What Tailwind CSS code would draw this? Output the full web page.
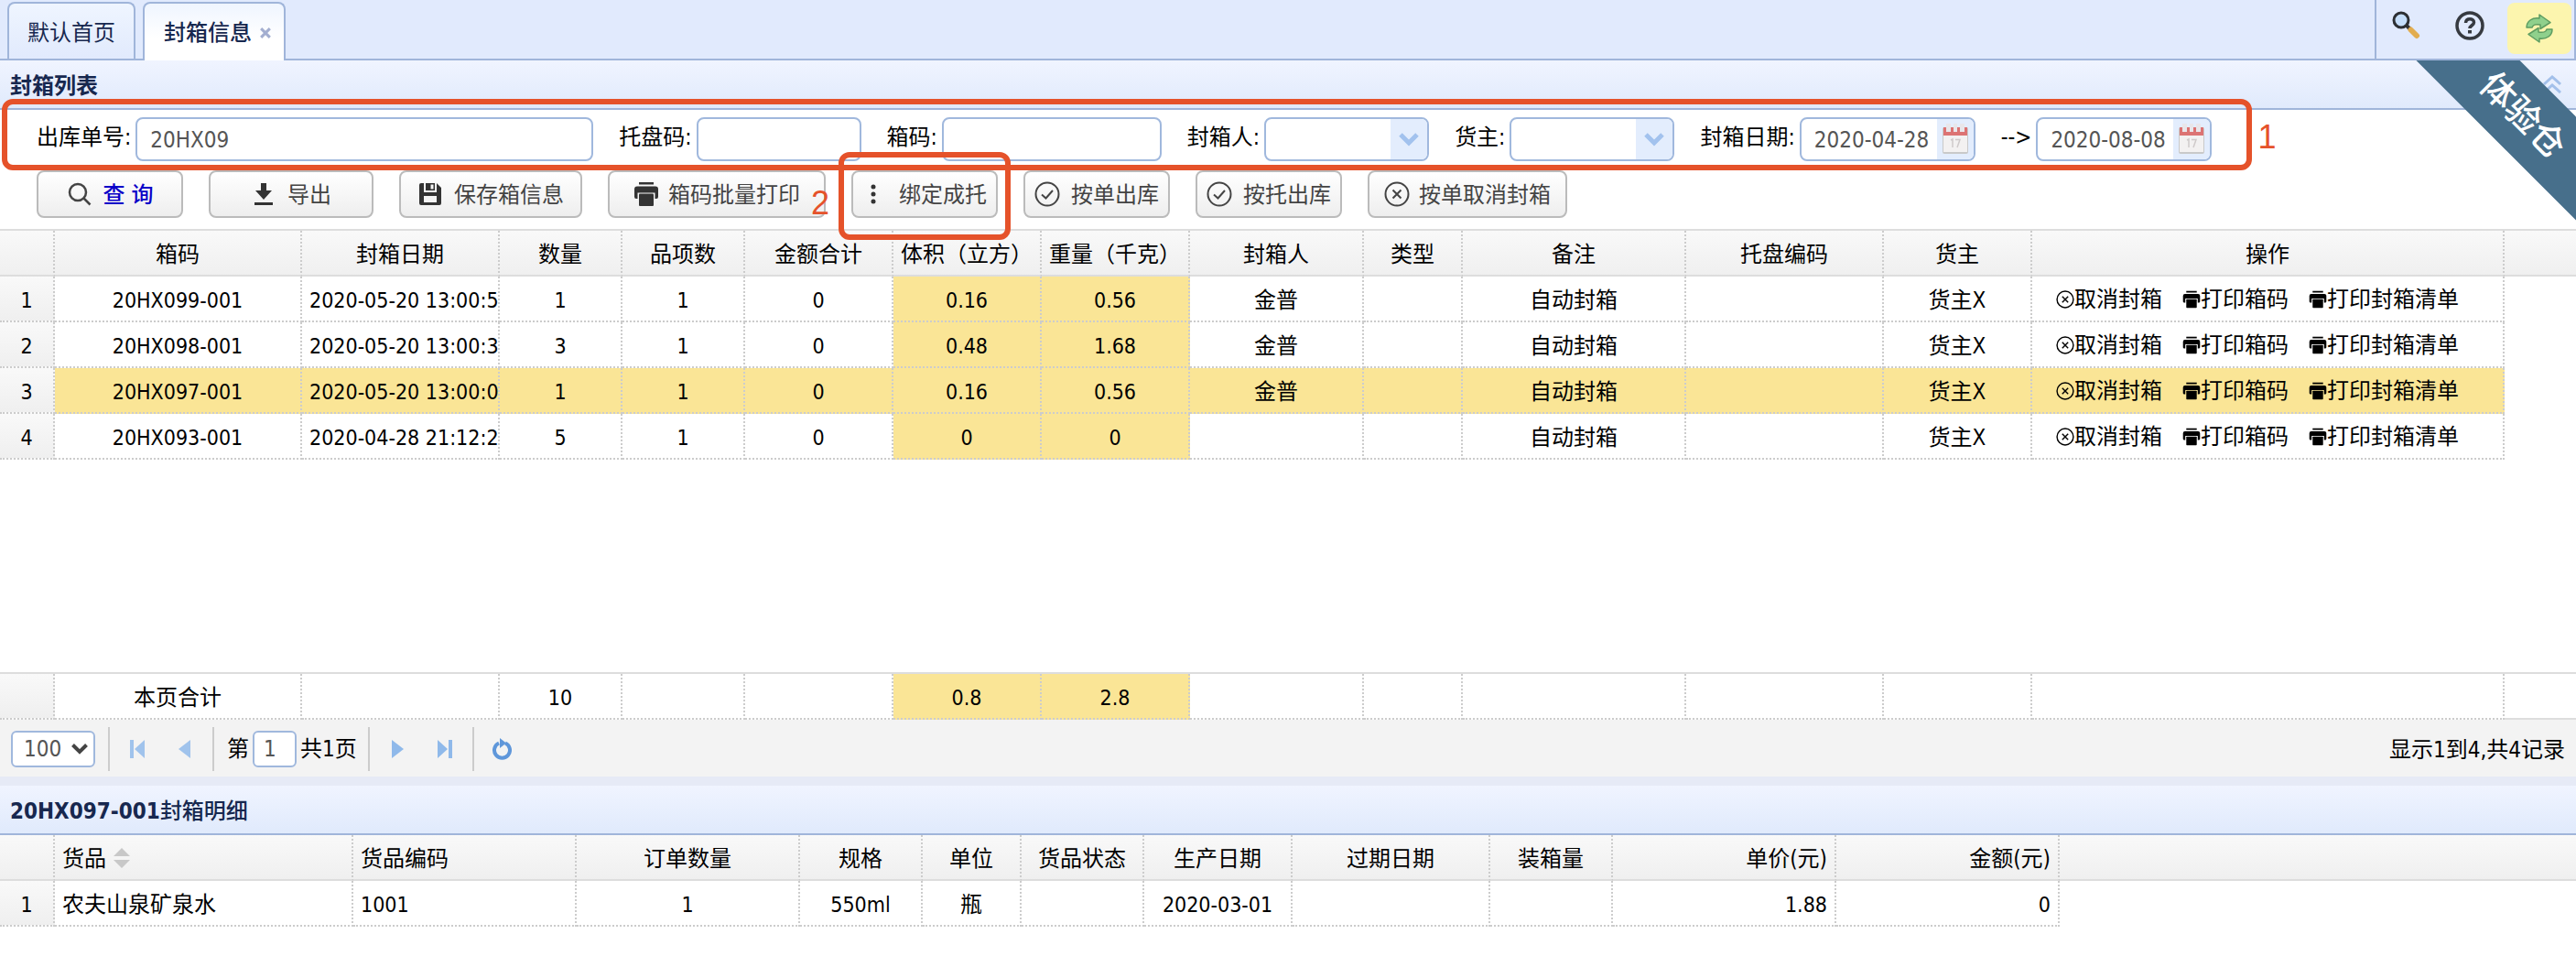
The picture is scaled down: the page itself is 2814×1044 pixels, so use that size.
<!DOCTYPE html>
<html lang="zh-CN">
<head>
  <meta charset="UTF-8" />
  <meta name="viewport" content="width=device-width, initial-scale=1.0"/>
  <title>封箱信息</title>
  <script src="https://cdn.jsdelivr.net/npm/@tailwindcss/browser@4"></script>
</head>
<body class="bg-white min-h-screen overflow-x-hidden text-2xl leading-8 text-black font-['DejaVu_Sans_Condensed','Noto_Sans_CJK_SC',sans-serif]">

  <!-- Shared icons -->
  <svg class="hidden">
    <symbol id="icon-print" viewBox="0 0 28 28">
      <path d="M6 2h16M4 5.500h20a3 3 0 0 1 3 3V17a2 2 0 0 1-2 2h-1.500v-6.500h-19V19H3a2 2 0 0 1-2-2V8.500a3 3 0 0 1 3-3z" fill="currentColor"/>
      <rect x="6" y="1" width="16" height="2.500" fill="currentColor"/>
      <rect x="6" y="13.500" width="16" height="13.500" rx="1" fill="currentColor"/>
    </symbol>
    <symbol id="icon-cancel" viewBox="0 0 28 28">
      <g fill="none" stroke="currentColor" stroke-width="2"><circle cx="14" cy="14" r="12.500"/><path d="M9.500 9.500l9 9M18.500 9.500l-9 9"/></g>
    </symbol>
    <symbol id="icon-check" viewBox="0 0 28 28">
      <g fill="none" stroke="currentColor" stroke-width="2"><circle cx="14" cy="14" r="12.500"/><path d="M8 14.500l4.500 4L20 10"/></g>
    </symbol>
    <symbol id="icon-calendar" viewBox="0 0 28 34">
      <rect x="0" y="4" width="28" height="29" rx="2" fill="#c9c9c9"/>
      <rect x="1" y="13" width="26" height="18" fill="#f3f1f1"/>
      <path d="M1 4h26v9H1z" fill="#dc7373"/>
      <path d="M4 0h5v9H4zM12 0h4v9h-4zM19 0h5v9h-5z" fill="#e9e6ea"/>
      <path d="M9 18l2-1v9M14 17.500h5l-3 8.500" fill="none" stroke="#cfcaca" stroke-width="1.500"/>
    </symbol>
    <symbol id="icon-down" viewBox="0 0 24 16">
      <path d="M3 3l9 9 9-9" fill="none" stroke="#a2c2ee" stroke-width="5"/>
    </symbol>
  </svg>

  <!-- Tabs -->
  <header class="flex h-[66px] border-b-2 border-[#a0b5da] bg-[#e1eafd] pl-2 text-[#17284f]">
    <nav class="flex gap-2 pt-0.5">
      <button type="button" class="h-[62px] w-[140px] rounded-t-lg border-2 border-b-0 border-[#a0b5da] bg-linear-to-b from-[#eff5ff] to-[#e1eafd] pt-1">默认首页</button>
      <div class="flex h-16 w-[156px] items-center justify-center gap-2 rounded-t-lg border-2 border-b-0 border-[#a0b5da] bg-linear-to-b from-[#eff5ff] to-white to-60% pt-0.5 pl-2">
        <button type="button" class="font-medium">封箱信息</button>
        <button type="button" aria-label="关闭">
          <svg class="size-3.5" viewBox="0 0 16 16"><path d="M2.500 2.500l11 11M13.500 2.500l-11 11" stroke="#a3aed0" stroke-width="3.500"/></svg>
        </button>
      </div>
    </nav>
    <div class="ml-auto flex items-start border-x-2 border-[#a0b5da]">
      <button type="button" aria-label="搜索" class="flex h-14 w-16 items-center justify-center">
        <svg class="size-8" viewBox="0 0 32 32">
          <path d="M17 16l6 6" stroke="#333" stroke-width="4"/>
          <path d="M21.500 20.500l6.500 6.500" stroke="#e2ad4f" stroke-width="6" stroke-linecap="round"/>
          <circle cx="11" cy="10" r="8" fill="#c5defb" stroke="#2c2f33" stroke-width="3"/>
        </svg>
      </button>
      <button type="button" aria-label="帮助" class="flex h-14 w-19 items-center justify-center">
        <svg class="size-8" viewBox="0 0 32 32" fill="none" stroke="#363a40">
          <circle cx="16" cy="16" r="14" stroke-width="3.500"/>
          <path d="M11.500 13c0-6 9-5.500 9-.5 0 3-4.500 3.500-4.500 6.500" stroke-width="3.500"/>
          <path d="M16 21v3.500" stroke-width="4"/>
        </svg>
      </button>
      <button type="button" aria-label="刷新" class="m-[3px] flex h-14 w-[70px] items-center justify-center rounded-lg bg-[#fcf5ae]">
        <svg class="size-8" viewBox="0 0 32 32" fill="#8fd08c" stroke="#5d9c61" stroke-width="1.500" stroke-linejoin="round">
          <path d="M2 15c0-7 6-11 14-10V1l12 8.500-11 7V12c-6-1-8 0-9 3z"/>
          <path d="M30 17c0 7-6 11-14 10v4L4 22.500l11-7V20c6 1 8 0 9-3z"/>
        </svg>
      </button>
    </div>
  </header>

  <main>
    <section class="relative">
      <div class="flex h-[54px] items-center justify-between border-b-2 border-[#a0b5da] bg-linear-to-b from-[#f0f4ff] to-[#e0eafc] pr-4 pl-[11px]">
        <h2 class="pt-1 font-bold text-[#17284f]">封箱列表</h2>
        <button type="button" aria-label="折叠">
          <svg class="size-5" viewBox="0 0 20 20" fill="none" stroke="#a3c0ea" stroke-width="3"><path d="M1 10l9-8 9 8M1 19l9-8 9 8"/></svg>
        </button>
      </div>

      <!-- Corner ribbon -->
      <div class="pointer-events-none absolute top-0 right-0 size-44 overflow-hidden">
        <div class="absolute top-5 -left-8 flex h-20 w-[300px] rotate-45 items-center justify-center bg-[#476f8b] text-[38px] font-medium text-white">体验仓</div>
      </div>

      <!-- Filters -->
      <form>
        <div class="relative flex w-fit items-center gap-7 pt-2 pr-[46px] pl-10">
          <div class="flex items-center gap-[5px]">
            <label for="orderNo" class="pb-1">出库单号:</label>
            <input id="orderNo" type="text" value="20HX09" class="h-12 w-[500px] rounded-lg border-2 border-[#a0b8dd] px-3.5 pt-0.5 text-[#555]">
          </div>
          <div class="flex items-center gap-[5px]">
            <label for="palletNo" class="pb-1">托盘码:</label>
            <input id="palletNo" type="text" class="h-12 w-[180px] rounded-lg border-2 border-[#a0b8dd] px-3.5 pt-0.5 text-[#555]">
          </div>
          <div class="flex items-center gap-[5px]">
            <label for="boxNo" class="pb-1">箱码:</label>
            <input id="boxNo" type="text" class="h-12 w-[240px] rounded-lg border-2 border-[#a0b8dd] px-3.5 pt-0.5 text-[#555]">
          </div>
          <div class="flex items-center gap-[5px]">
            <label for="packer" class="pb-1">封箱人:</label>
            <div class="relative">
              <select id="packer" class="block h-12 w-[180px] appearance-none rounded-lg border-2 border-[#a0b8dd] bg-white px-3.5"><option></option></select>
              <span class="pointer-events-none absolute inset-y-0.5 right-0.5 flex w-10 items-center justify-center rounded-r-md bg-[#e3edfd]"><svg class="h-4 w-6"><use href="#icon-down"/></svg></span>
            </div>
          </div>
          <div class="flex items-center gap-[5px]">
            <label for="owner" class="pb-1">货主:</label>
            <div class="relative">
              <select id="owner" class="block h-12 w-[180px] appearance-none rounded-lg border-2 border-[#a0b8dd] bg-white px-3.5"><option></option></select>
              <span class="pointer-events-none absolute inset-y-0.5 right-0.5 flex w-10 items-center justify-center rounded-r-md bg-[#e3edfd]"><svg class="h-4 w-6"><use href="#icon-down"/></svg></span>
            </div>
          </div>
          <div class="flex items-center gap-[5px]">
            <label for="dateFrom" class="pb-1">封箱日期:</label>
            <div class="relative">
              <input id="dateFrom" type="text" value="2020-04-28" class="block h-12 w-48 rounded-lg border-2 border-[#a0b8dd] pt-0.5 pl-3.5 text-[#555]">
              <span class="pointer-events-none absolute inset-y-0.5 right-0.5 flex w-10 items-center justify-center rounded-r-md bg-[#e3edfd]"><svg class="h-[34px] w-7"><use href="#icon-calendar"/></svg></span>
            </div>
          </div>
          <div class="flex items-center gap-[5px]">
            <label for="dateTo" class="pb-1">--&gt;</label>
            <div class="relative">
              <input id="dateTo" type="text" value="2020-08-08" class="block h-12 w-48 rounded-lg border-2 border-[#a0b8dd] pt-0.5 pl-3.5 text-[#555]">
              <span class="pointer-events-none absolute inset-y-0.5 right-0.5 flex w-10 items-center justify-center rounded-r-md bg-[#e3edfd]"><svg class="h-[34px] w-7"><use href="#icon-calendar"/></svg></span>
            </div>
          </div>
          <span class="pointer-events-none absolute inset-x-0.5 -top-3 -bottom-2.5 z-10 rounded-xl border-6 border-[#e5522a]"></span>
          <span class="absolute top-2.5 left-full ml-1 text-4xl font-['Liberation_Sans',sans-serif] text-[#e5522a]">1</span>
        </div>

        <!-- Toolbar -->
        <div class="mt-2.5 mb-3 flex gap-7 pl-10 text-[#444]">
          <button type="button" class="flex h-[52px] w-40 items-center justify-center gap-3 rounded-lg border-2 border-[#bbb] bg-linear-to-b from-white to-[#eee]">
            <svg class="size-7" viewBox="0 0 28 28" fill="none" stroke="#444" stroke-width="2.500"><circle cx="12" cy="12" r="9"/><path d="M18.500 18.500l7 7"/></svg>
            <span class="pt-0.5 font-medium text-[#0a00c8]">查 询</span>
          </button>
          <button type="button" class="flex h-[52px] w-[180px] items-center justify-center gap-3 rounded-lg border-2 border-[#bbb] bg-linear-to-b from-white to-[#eee]">
            <svg class="size-7" viewBox="0 0 28 28" fill="#333"><path d="M11 2h6v8h6l-9 10-9-10h6zM4 23h20v3H4z"/></svg>
            <span class="pt-0.5">导出</span>
          </button>
          <button type="button" class="flex h-[52px] w-[200px] items-center justify-center gap-3 rounded-lg border-2 border-[#bbb] bg-linear-to-b from-white to-[#eee]">
            <svg class="size-7" viewBox="0 0 28 28" fill="#333"><path fill-rule="evenodd" d="M4 2h3v10h14V2l5 5v17a2 2 0 0 1-2 2H4a2 2 0 0 1-2-2V4a2 2 0 0 1 2-2zM7 16v7h14v-7z"/><path d="M9 2h10v8H9z"/><path d="M14.500 3.500h3v5h-3z" fill="#f7f7f7"/></svg>
            <span class="pt-0.5">保存箱信息</span>
          </button>
          <button type="button" class="flex h-[52px] w-[238px] items-center justify-center gap-2.5 rounded-lg border-2 border-[#bbb] bg-linear-to-b from-white to-[#eee]">
            <svg class="size-7 text-[#333]"><use href="#icon-print"/></svg>
            <span class="pt-0.5">箱码批量打印</span>
          </button>
          <div class="relative">
            <button type="button" class="flex h-[52px] w-40 items-center justify-center gap-3 rounded-lg border-2 border-[#bbb] bg-linear-to-b from-white to-[#eee]">
              <svg class="size-7" viewBox="0 0 28 28" fill="#333"><circle cx="12" cy="6" r="2.500"/><circle cx="12" cy="14" r="2.500"/><circle cx="12" cy="22" r="2.500"/></svg>
              <span class="pt-0.5">绑定成托</span>
            </button>
            <span class="pointer-events-none absolute -inset-x-3.5 -top-5 -bottom-6 z-10 rounded-xl border-6 border-[#e5522a]"></span>
            <span class="absolute top-4 right-full mr-6 text-4xl font-['Liberation_Sans',sans-serif] text-[#e5522a]">2</span>
          </div>
          <button type="button" class="flex h-[52px] w-40 items-center justify-center gap-3 rounded-lg border-2 border-[#bbb] bg-linear-to-b from-white to-[#eee]">
            <svg class="size-7"><use href="#icon-check"/></svg>
            <span class="pt-0.5">按单出库</span>
          </button>
          <button type="button" class="flex h-[52px] w-40 items-center justify-center gap-3 rounded-lg border-2 border-[#bbb] bg-linear-to-b from-white to-[#eee]">
            <svg class="size-7"><use href="#icon-check"/></svg>
            <span class="pt-0.5">按托出库</span>
          </button>
          <button type="button" class="flex h-[52px] w-[218px] items-center justify-center gap-2.5 rounded-lg border-2 border-[#bbb] bg-linear-to-b from-white to-[#eee]">
            <svg class="size-7"><use href="#icon-cancel"/></svg>
            <span class="pt-0.5">按单取消封箱</span>
          </button>
        </div>
      </form>

      <!-- Box list -->
      <div class="min-h-[484px] border-t-2 border-[#ddd]">
        <table class="w-full table-fixed border-separate border-spacing-0 text-center whitespace-nowrap">
          <colgroup>
            <col class="w-[60px]"><col class="w-[270px]"><col class="w-[216px]"><col class="w-[134px]"><col class="w-[134px]"><col class="w-[162px]"><col class="w-[162px]"><col class="w-[162px]"><col class="w-[190px]"><col class="w-[108px]"><col class="w-[244px]"><col class="w-[216px]"><col class="w-[162px]"><col class="w-[516px]"><col>
          </colgroup>
          <thead id="boxHead" class="bg-linear-to-b from-[#f9f9f9] to-[#efefef]"></thead>
          <tbody id="boxBody"></tbody>
        </table>
      </div>
      <table class="w-full table-fixed border-separate border-spacing-0 border-t-2 border-[#ddd] text-center whitespace-nowrap">
        <colgroup>
          <col class="w-[60px]"><col class="w-[270px]"><col class="w-[216px]"><col class="w-[134px]"><col class="w-[134px]"><col class="w-[162px]"><col class="w-[162px]"><col class="w-[162px]"><col class="w-[190px]"><col class="w-[108px]"><col class="w-[244px]"><col class="w-[216px]"><col class="w-[162px]"><col class="w-[516px]"><col>
        </colgroup>
        <tbody id="boxFoot"></tbody>
      </table>

      <!-- Pager -->
      <div class="flex h-[62px] items-center bg-[#f3f3f3] pt-0.5 pr-3 pl-3">
        <label for="pageSize" class="sr-only">每页条数</label>
        <div class="relative">
          <select id="pageSize" class="block h-10 w-[92px] appearance-none rounded-md border-2 border-[#a0b8dd] bg-white pl-3 text-[#555]"><option>100</option></select>
          <svg class="pointer-events-none absolute top-3.5 right-2 h-3 w-[18px]" viewBox="0 0 18 12"><path d="M1.500 1.500L9 9l7.500-7.500" fill="none" stroke="#444" stroke-width="4"/></svg>
        </div>
        <span class="mr-1 ml-3.5 h-12 w-0.5 bg-[#ccc]"></span>
        <button type="button" aria-label="首页" class="flex w-13 justify-center"><svg class="h-5 w-4" viewBox="0 0 16 20" fill="#a0c3ec"><path d="M0 0h4v20H0zM16 0v20L5 10z"/></svg></button>
        <button type="button" aria-label="上一页" class="flex w-13 justify-center"><svg class="h-5 w-3.5" viewBox="0 0 14 20" fill="#a0c3ec"><path d="M13 0v20L0 10z"/></svg></button>
        <span class="mr-3.5 ml-1 h-12 w-0.5 bg-[#ccc]"></span>
        <label for="pageNo">第</label>
        <input id="pageNo" type="text" value="1" class="mx-1 h-10 w-12 rounded-md border-2 border-[#a0b8dd] bg-white pl-2.5 text-[#555]">
        <span>共1页</span>
        <span class="mr-1 ml-3 h-12 w-0.5 bg-[#ccc]"></span>
        <button type="button" aria-label="下一页" class="flex w-13 justify-center"><svg class="h-5 w-3.5" viewBox="0 0 14 20" fill="#8fb9ea"><path d="M1 0v20l13-10z"/></svg></button>
        <button type="button" aria-label="末页" class="flex w-13 justify-center"><svg class="h-5 w-4" viewBox="0 0 16 20" fill="#8fb9ea"><path d="M12 0h4v20h-4zM0 0v20l11-10z"/></svg></button>
        <span class="mx-1 h-12 w-0.5 bg-[#ccc]"></span>
        <button type="button" aria-label="刷新" class="flex w-13 justify-center">
          <svg class="h-6 w-[22px]" viewBox="0 0 22 24"><path d="M15 5.500a8.500 8.500 0 1 1-7 0" fill="none" stroke="#5f97da" stroke-width="4"/><path d="M9 0l7 5.500-7 5.500z" fill="#5f97da"/></svg>
        </button>
        <span class="ml-auto pt-0.5">显示1到4,共4记录</span>
      </div>
    </section>

    <!-- Box detail -->
    <section class="border-t-10 border-[#e6eaf6]">
      <h2 class="flex h-[54px] items-center border-b-2 border-[#a0b5da] bg-linear-to-b from-[#f0f4ff] to-[#e0eafc] pt-1 pl-[11px] text-[#17284f]"><span class="font-bold">20HX097-001</span><span class="font-medium">封箱明细</span></h2>
      <table class="w-full table-fixed border-separate border-spacing-0 text-center whitespace-nowrap">
        <colgroup>
          <col class="w-[60px]"><col class="w-[326px]"><col class="w-[244px]"><col class="w-[244px]"><col class="w-[134px]"><col class="w-[108px]"><col class="w-[134px]"><col class="w-[162px]"><col class="w-[216px]"><col class="w-[134px]"><col class="w-[244px]"><col class="w-[244px]"><col>
        </colgroup>
        <thead id="detailHead" class="bg-linear-to-b from-[#f9f9f9] to-[#efefef]"></thead>
        <tbody id="detailBody"></tbody>
      </table>
    </section>
  </main>

  <script>
    const boxColumns = ['', '箱码', '封箱日期', '数量', '品项数', '金额合计', '体积（立方）', '重量（千克）', '封箱人', '类型', '备注', '托盘编码', '货主', '操作'];
    const boxes = [
      ['20HX099-001', '2020-05-20 13:00:56', '1', '1', '0', '0.16', '0.56', '金普', '', '自动封箱', '', '货主X'],
      ['20HX098-001', '2020-05-20 13:00:32', '3', '1', '0', '0.48', '1.68', '金普', '', '自动封箱', '', '货主X'],
      ['20HX097-001', '2020-05-20 13:00:08', '1', '1', '0', '0.16', '0.56', '金普', '', '自动封箱', '', '货主X'],
      ['20HX093-001', '2020-04-28 21:12:24', '5', '1', '0', '0', '0', '', '', '自动封箱', '', '货主X']
    ];
    const selected = 2;
    const totals = ['本页合计', '', '10', '', '', '0.8', '2.8', '', '', '', '', '', ''];

    const headCell = 'h-[50px] border-b-2 border-b-[#ddd] border-r-2 border-r-[#ccc] [border-right-style:dotted] px-2 pt-1 font-normal';
    const cell = 'h-[50px] overflow-hidden border-r-2 border-b-2 border-dotted border-[#ccc] pt-1';
    const rowNo = 'bg-linear-to-b from-[#f9f9f9] to-[#efefef] text-[23px]';
    const size = text => /^[\x00-\x7f]*$/.test(text) ? 'text-[23px]' : '';

    const actions = `
      <a href="#" class="mr-[22px] inline-flex items-center"><svg class="size-5"><use href="#icon-cancel"/></svg>取消封箱</a><a href="#" class="mr-[22px] inline-flex items-center"><svg class="size-5"><use href="#icon-print"/></svg>打印箱码</a><a href="#" class="mr-[22px] inline-flex items-center"><svg class="size-5"><use href="#icon-print"/></svg>打印封箱清单</a>`;

    document.getElementById('boxHead').innerHTML =
      `<tr>${boxColumns.map(c => `<th class="${headCell}">${c}</th>`).join('')}<th class="border-b-2 border-[#ddd]"></th></tr>`;

    // The date column is narrower than its text, so it is left aligned and runs to the cell edge
    document.getElementById('boxBody').innerHTML = boxes.map((row, r) => `
      <tr>
        <td class="${cell} ${rowNo}">${r + 1}</td>
        ${row.map((v, i) => `<td class="${cell} ${size(v)} ${i === 1 ? 'pl-2 text-left' : 'px-2'} ${r === selected || i === 5 || i === 6 ? 'bg-[#fae596]' : ''}">${v}</td>`).join('')}
        <td class="${cell} ${r === selected ? 'bg-[#fae596]' : ''}">${actions}</td>
        <td></td>
      </tr>`).join('');

    document.getElementById('boxFoot').innerHTML = `
      <tr>
        <td class="${cell} ${rowNo}"></td>
        ${totals.map((v, i) => `<td class="${cell} px-2 ${size(v)} ${i === 5 || i === 6 ? 'bg-[#fae596]' : ''}">${v}</td>`).join('')}
        <td class="border-b-2 border-[#ddd]"></td>
      </tr>`;

    const sortIcon = '<svg class="ml-2 inline-block h-[22px] w-[18px] align-[-2px]" viewBox="0 0 18 22" fill="#c8c8c8"><path d="M9 0l9 9H0zM9 22l9-9H0z"/></svg>';
    const detailColumns = [['', ''], ['货品' + sortIcon, 'text-left'], ['货品编码', 'text-left'], ['订单数量', ''], ['规格', ''], ['单位', ''], ['货品状态', ''], ['生产日期', ''], ['过期日期', ''], ['装箱量', ''], ['单价(元)', 'text-right'], ['金额(元)', 'text-right']];
    const detail = ['1', '农夫山泉矿泉水', '1001', '1', '550ml', '瓶', '', '2020-03-01', '', '', '1.88', '0'];

    document.getElementById('detailHead').innerHTML =
      `<tr>${detailColumns.map(([c, align]) => `<th class="${headCell} ${align}">${c}</th>`).join('')}<th class="border-b-2 border-[#ddd]"></th></tr>`;

    document.getElementById('detailBody').innerHTML =
      `<tr>${detail.map((v, i) => `<td class="${cell} px-2 ${i === 0 ? rowNo : size(v)} ${detailColumns[i][1]}">${v}</td>`).join('')}<td></td></tr>`;
  </script>
</body>
</html>
